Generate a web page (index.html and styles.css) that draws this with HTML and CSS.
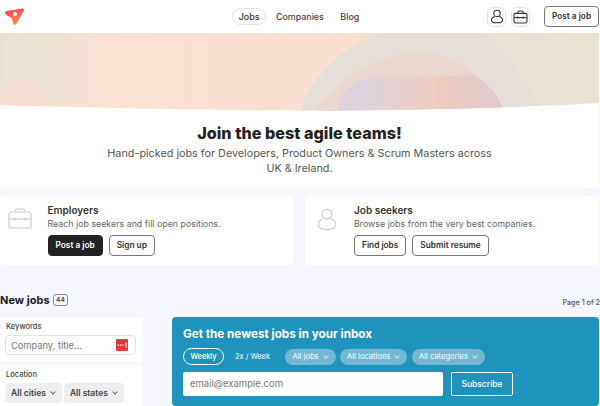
FILE: index.html
```html
<!DOCTYPE html>
<html lang="en">
<head>
    <meta charset="UTF-8">
    <meta name="viewport" content="width=device-width, initial-scale=1.0">
    <title>Agile jobs</title>
    <link rel="stylesheet" href="styles.css">
</head>
<body>
    <header class="topbar">
        <a class="logo" href="#">
            <svg width="22" height="20" viewBox="0 0 22 20">
                <defs>
                    <linearGradient id="logoFill" x1="0.2" y1="0.1" x2="0.6" y2="1">
                        <stop offset="0" stop-color="#f9415a"/>
                        <stop offset="1" stop-color="#fb923c"/>
                    </linearGradient>
                </defs>
                <path d="M1.8 4.2 L18.4 1.4 Q20.6 1.4 20 3.4 L12.4 16.8 Q10.2 19 9.2 16.6 L8.2 12.4 Q7.8 11 6.6 10.4 L2.2 8 Q0.2 6 1.8 4.2 Z" fill="url(#logoFill)"/>
                <circle cx="11" cy="7" r="2" fill="#fff"/>
            </svg>
        </a>
        <nav class="nav">
            <a class="nav-link active" href="#">Jobs</a>
            <a class="nav-link" href="#">Companies</a>
            <a class="nav-link" href="#">Blog</a>
        </nav>
        <div class="topbar-actions">
            <a class="icon-btn" href="#">
                <svg width="14" height="15" viewBox="0 0 14 15" fill="none" stroke="#333" stroke-width="1.1">
                    <circle cx="7" cy="4.4" r="3.2"/>
                    <path d="M4.6 7.4 C2.6 8.2 1.4 9.6 1.4 11 C1.4 13 3.4 13.8 7 13.8 C10.6 13.8 12.6 13 12.6 11 C12.6 9.6 11.4 8.2 9.4 7.4"/>
                </svg>
            </a>
            <a class="icon-btn" href="#">
                <svg width="15" height="14" viewBox="0 0 15 14" fill="none" stroke="#333" stroke-width="1.1">
                    <rect x="1" y="3.4" width="13" height="9.6" rx="1.6"/>
                    <path d="M4.8 3.4 V2 Q4.8 1 5.8 1 H9.2 Q10.2 1 10.2 2 V3.4"/>
                    <path d="M1 7.6 H14"/>
                    <path d="M4.6 6.6 V8.6 M10.4 6.6 V8.6"/>
                </svg>
            </a>
            <a class="btn btn-small" href="#">Post a job</a>
        </div>
    </header>

    <section class="hero">
        <svg class="hero-art" width="599" height="78" viewBox="0 0 599 78">
            <defs>
                <linearGradient id="heroBase" x1="0" y1="0" x2="1" y2="0">
                    <stop offset="0" stop-color="#e8e4d4"/>
                    <stop offset="0.08" stop-color="#ece3d3"/>
                    <stop offset="0.16" stop-color="#fae1d4"/>
                    <stop offset="0.6" stop-color="#fbdfd0"/>
                    <stop offset="0.8" stop-color="#ebe2d8"/>
                    <stop offset="1" stop-color="#e8e3d0"/>
                </linearGradient>
                <linearGradient id="heroMid" x1="0" y1="0" x2="1" y2="0">
                    <stop offset="0" stop-color="#dbd3df"/>
                    <stop offset="0.25" stop-color="#e0d2d8"/>
                    <stop offset="0.6" stop-color="#f2cbbe"/>
                    <stop offset="1" stop-color="#dccbd3"/>
                </linearGradient>
                <clipPath id="heroCurve">
                    <path d="M0 72 Q150 77 300 77.5 Q470 77 599 70 V0 H0 Z"/>
                </clipPath>
            </defs>
            <g clip-path="url(#heroCurve)">
                <rect width="600" height="78" fill="url(#heroBase)"/>
                <path d="M0 67 Q4 47 20 45 Q46 50 52 78 H0 Z" fill="#f6dcd0"/>
                <path d="M300 78 Q320 22 380 0 H483 Q520 30 543 78 Z" fill="#e6dfd9"/>
                <path d="M316 78 Q350 24 417 20 Q460 20 480 47 Q495 65 503 78 Z" fill="#ead7cf"/>
                <path d="M337 78 Q345 44 380 44 Q440 44 475 42 Q495 55 505 78 Z" fill="url(#heroMid)"/>
            </g>
        </svg>
        <h1 class="hero-title">Join the best agile teams!</h1>
        <p class="hero-sub">Hand-picked jobs for Developers, Product Owners &amp; Scrum Masters across UK &amp; Ireland.</p>
    </section>

    <main class="content">
        <div class="cards">
            <div class="card card-left">
                <svg class="card-icon" width="24" height="21" viewBox="0 0 24 21" fill="none" stroke="#ccc" stroke-width="1.2">
                    <rect x="1" y="4" width="22" height="16" rx="2"/>
                    <path d="M7.5 4 V2.4 Q7.5 1 9 1 H15 Q16.5 1 16.5 2.4 V4"/>
                    <path d="M1 11 H23"/>
                    <path d="M7 9.4 V12.6 M17 9.4 V12.6"/>
                </svg>
                <div class="card-body">
                    <h3 class="card-title">Employers</h3>
                    <p class="card-text">Reach job seekers and fill open positions.</p>
                    <div class="card-buttons">
                        <a class="btn btn-dark" href="#">Post a job</a>
                        <a class="btn" href="#">Sign up</a>
                    </div>
                </div>
            </div>
            <div class="card card-right">
                <svg class="card-icon" width="20" height="23" viewBox="0 0 20 24" fill="none" stroke="#ccc" stroke-width="1.2">
                    <circle cx="10" cy="6.4" r="5"/>
                    <path d="M6.2 11 C3 12.2 1 14.4 1 17 C1 20.4 4 22.6 10 22.6 C16 22.6 19 20.4 19 17 C19 14.4 17 12.2 13.8 11"/>
                </svg>
                <div class="card-body">
                    <h3 class="card-title">Job seekers</h3>
                    <p class="card-text">Browse jobs from the very best companies.</p>
                    <div class="card-buttons">
                        <a class="btn" href="#">Find jobs</a>
                        <a class="btn" href="#">Submit resume</a>
                    </div>
                </div>
            </div>
        </div>

        <div class="jobs-head">
            <h2 class="jobs-title">New jobs <span class="count">44</span></h2>
            <span class="page-info">Page 1 of 2</span>
        </div>

        <div class="jobs-layout">
            <aside class="sidebar">
                <div class="filter">
                    <label class="filter-label">Keywords</label>
                    <div class="search-box">
                        <span class="search-hint">Company, title...</span>
                        <span class="search-badge">
                            <svg width="12" height="12" viewBox="0 0 12 12" fill="#fff">
                                <circle cx="2.4" cy="6" r="0.8"/>
                                <circle cx="4.8" cy="6" r="0.8"/>
                                <circle cx="7.2" cy="6" r="0.8"/>
                                <rect x="9.6" y="3.4" width="1" height="5.2"/>
                            </svg>
                        </span>
                    </div>
                </div>
                <div class="filter">
                    <label class="filter-label">Location</label>
                    <div class="select-row">
                        <span class="select">All cities <i class="chev"></i></span>
                        <span class="select">All states <i class="chev"></i></span>
                    </div>
                </div>
            </aside>

            <section class="newsletter">
                <h2 class="newsletter-title">Get the newest jobs in your inbox</h2>
                <div class="newsletter-options">
                    <span class="freq freq-on">Weekly</span>
                    <span class="freq">2x / Week</span>
                    <span class="pill first-pill">All jobs <i class="chev chev-light"></i></span>
                    <span class="pill">All locations <i class="chev chev-light"></i></span>
                    <span class="pill">All categories <i class="chev chev-light"></i></span>
                </div>
                <div class="newsletter-form">
                    <div class="email-box">email@example.com</div>
                    <a class="subscribe" href="#">Subscribe</a>
                </div>
            </section>
        </div>
    </main>
</body>
</html>
```

FILE: styles.css
```css
* {
    box-sizing: border-box;
}

html, body {
    margin: 0;
    height: 406px;
    overflow: hidden;
}

body {
    background: #f5f6fe;
    color: #222;
    font-family: 'Inter', 'Liberation Sans', sans-serif;
}

a {
    color: inherit;
    text-decoration: none;
}

h1, h2, h3, p {
    margin: 0;
}

.topbar {
    height: 33px;
    background: #fff;
    display: grid;
    grid-template-columns: 1fr auto 1fr;
    align-items: center;
    padding: 0 1px 0 4px;
}

.logo {
    display: flex;
    align-items: center;
}

.nav {
    display: flex;
    align-items: center;
    gap: 2.5px;
    margin-right: 5px;
    font-size: 8.9px;
    font-weight: 500;
    color: #444;
}

.nav-link {
    padding: 2px 6px;
    border: 1px solid transparent;
    border-radius: 9px;
    height: 17px;
    line-height: 12px;
}

.nav-link.active {
    border-color: #e2e2e2;
    color: #333;
}

.topbar-actions {
    display: flex;
    align-items: center;
    justify-content: flex-end;
    gap: 5px;
}

.icon-btn {
    width: 19px;
    height: 20px;
    border: 1px solid #e4e4e4;
    border-radius: 6px;
    display: flex;
    align-items: center;
    justify-content: center;
}

.topbar-actions .btn-small {
    width: 55px;
    margin-left: 9px;
    padding: 0;
    text-align: center;
}

.hero {
    background: #fff;
    height: 155px;
    text-align: center;
    margin-right: 1px;
}

.hero-art {
    display: block;
}

.hero-title {
    margin-top: 11px;
    font-size: 16.2px;
    line-height: 22px;
    font-weight: 800;
    color: #222;
}

.hero-sub {
    width: 395px;
    margin: 2px auto 0;
    font-size: 10.8px;
    line-height: 15px;
    color: #555;
}

.content {
    padding-top: 8px;
}

.cards {
    display: flex;
    gap: 12px;
    height: 69px;
    padding-right: 1px;
}

.card {
    background: #fff;
    border-radius: 3px;
    display: flex;
    flex: 1;
}

.card-left {
    padding-left: 8px;
    flex: 0 0 293px;
}

.card-right {
    padding-left: 12px;
}

.card-icon {
    margin-top: 12px;
    flex-shrink: 0;
}

.card-left .card-body {
    margin-left: 15.5px;
}

.card-right .card-body {
    margin-left: 17px;
}

.card-body {
    padding-top: 7px;
}

.card-title {
    font-size: 10px;
    line-height: 14px;
    font-weight: 600;
    color: #333;
}

.card-text {
    font-size: 8.85px;
    line-height: 14px;
    color: #666;
}

.card-buttons {
    display: flex;
    gap: 6px;
    margin-top: 4px;
}

.btn {
    display: inline-block;
    height: 21px;
    padding: 0 7px;
    border: 1px solid #777;
    border-radius: 4px;
    background: #fff;
    font-size: 8.3px;
    font-weight: 600;
    line-height: 19px;
    color: #333;
    white-space: nowrap;
}

.btn-dark {
    background: #222;
    border-color: #222;
    color: #fff;
}

.jobs-head {
    display: flex;
    justify-content: space-between;
    align-items: center;
    height: 53px;
    padding-top: 17px;
}

.jobs-title {
    font-size: 11px;
    font-weight: 700;
    color: #222;
    display: flex;
    align-items: center;
    gap: 3.5px;
}

.count {
    font-size: 6.5px;
    font-weight: 600;
    color: #444;
    border: 1px solid #888;
    border-radius: 3px;
    padding: 1px 2px;
    line-height: 8px;
}

.page-info {
    font-size: 7.2px;
    font-weight: 500;
    color: #555;
    white-space: nowrap;
    margin-top: 4px;
}

.jobs-layout {
    display: grid;
    grid-template-columns: 143px 1fr;
    column-gap: 29px;
    margin-top: -1px;
}

.filter {
    background: #fff;
    padding: 5px 7px 7px 5px;
    border-radius: 3px;
    margin-bottom: 3px;
}

.filter-label {
    display: block;
    font-size: 7.5px;
    font-weight: 500;
    line-height: 10px;
    color: #444;
    margin: 0 0 3px 1px;
}

.search-box {
    height: 20px;
    border: 1px solid #e2e2e2;
    border-radius: 4px;
    display: flex;
    align-items: center;
    justify-content: space-between;
    padding: 0 7px 0 5px;
    font-size: 9.3px;
    color: #777;
}

.search-badge {
    width: 12px;
    height: 12px;
    background: #e0383b;
    border-radius: 1px;
    display: flex;
}

.select-row {
    display: flex;
    gap: 2px;
}

.select {
    height: 20px;
    padding: 0 6px;
    border-radius: 4px;
    background: #eee;
    font-size: 8.5px;
    font-weight: 600;
    line-height: 20px;
    color: #444;
    display: flex;
    align-items: center;
    gap: 5px;
    white-space: nowrap;
}

.chev {
    display: inline-block;
    width: 4px;
    height: 4px;
    border-right: 1px solid #666;
    border-bottom: 1px solid #666;
    transform: rotate(45deg);
    margin: -2px 1px 0 0;
}

.chev-light {
    border-color: #cfe6f1;
}

.newsletter {
    background: #1e93bd;
    border-radius: 4px;
    margin-right: 1px;
    height: 89px;
    padding: 10px 11px;
    color: #fff;
}

.newsletter-title {
    font-size: 11.7px;
    line-height: 15px;
    font-weight: 700;
}

.newsletter-options {
    display: flex;
    align-items: center;
    margin-top: 6px;
    font-size: 7.6px;
    font-weight: 400;
}

.freq {
    height: 17px;
    line-height: 15px;
    padding: 0 6.5px;
    border: 1px solid transparent;
    border-radius: 9px;
    margin-right: 3.5px;
    font-size: 7.4px;
    white-space: nowrap;
}

.freq-on {
    border-color: #fff;
    font-weight: 500;
}

.pill {
    height: 16px;
    padding: 0 7px;
    border-radius: 8px;
    background: #74b7d3;
    display: flex;
    align-items: center;
    gap: 5px;
    margin-right: 4.4px;
    white-space: nowrap;
}

.first-pill {
    margin-left: 4.5px;
}

.newsletter-form {
    display: flex;
    gap: 8px;
    margin-top: 7px;
}

.email-box {
    width: 260px;
    height: 24px;
    background: #fff;
    border-radius: 2px;
    padding: 0 7px;
    font-size: 9.5px;
    line-height: 24px;
    color: #777;
}

.subscribe {
    width: 62px;
    height: 24px;
    border: 1px solid #fff;
    border-radius: 2px;
    font-size: 8.5px;
    font-weight: 500;
    line-height: 22px;
    text-align: center;
}
```
